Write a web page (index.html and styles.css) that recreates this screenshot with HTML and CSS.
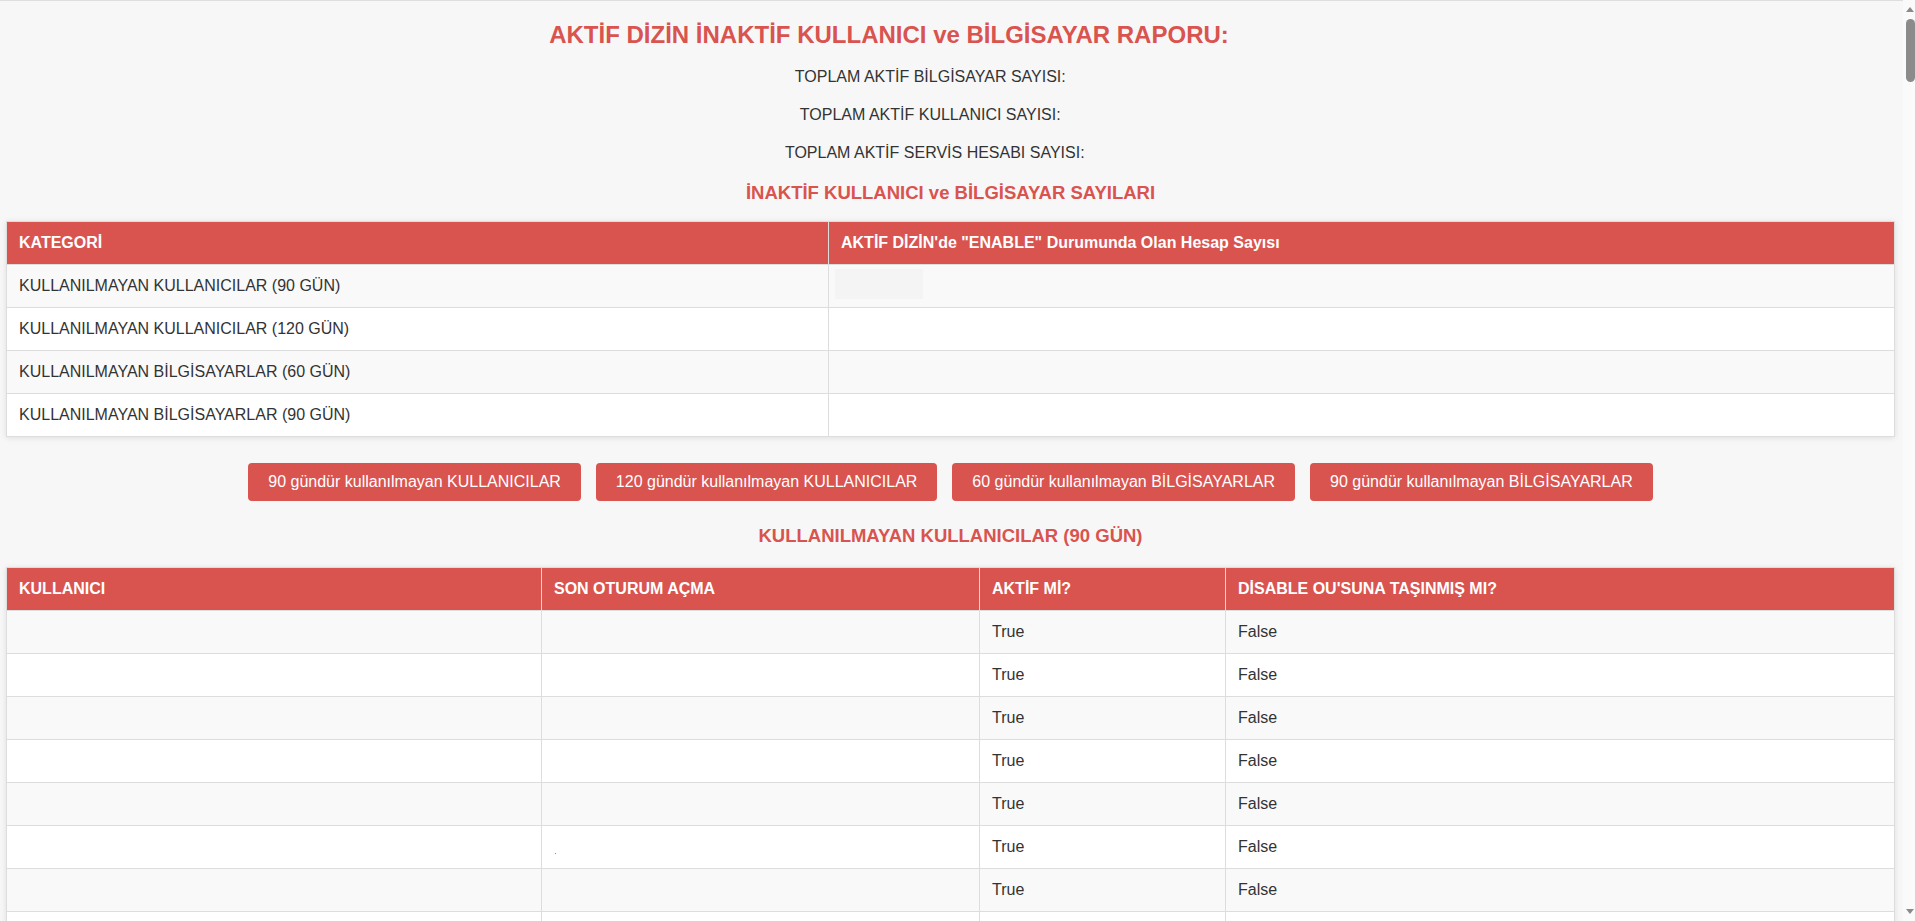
FILE: index.html
```html
<!DOCTYPE html>
<html lang="tr">
<head>
<meta charset="utf-8">
<title>AKTİF DİZİN İNAKTİF KULLANICI ve BİLGİSAYAR RAPORU</title>
<link rel="stylesheet" href="styles.css">
</head>
<body>
<main class="report">
  <h2 class="report-title">AKTİF DİZİN İNAKTİF KULLANICI ve BİLGİSAYAR RAPORU:<span class="blank blank-title"></span></h2>
  <p class="total">TOPLAM AKTİF BİLGİSAYAR SAYISI: <span class="blank blank-4"></span></p>
  <p class="total">TOPLAM AKTİF KULLANICI SAYISI: <span class="blank blank-4"></span></p>
  <p class="total">TOPLAM AKTİF SERVİS HESABI SAYISI: <span class="blank blank-3"></span></p>

  <h3 class="section-title section-first">İNAKTİF KULLANICI ve BİLGİSAYAR SAYILARI</h3>
  <table class="grid summary">
    <colgroup><col class="col-category"><col></colgroup>
    <thead>
      <tr><th>KATEGORİ</th><th>AKTİF DİZİN'de "ENABLE" Durumunda Olan Hesap Sayısı</th></tr>
    </thead>
    <tbody>
      <tr><td>KULLANILMAYAN KULLANICILAR (90 GÜN)</td><td><span class="masked"></span></td></tr>
      <tr><td>KULLANILMAYAN KULLANICILAR (120 GÜN)</td><td></td></tr>
      <tr><td>KULLANILMAYAN BİLGİSAYARLAR (60 GÜN)</td><td></td></tr>
      <tr><td>KULLANILMAYAN BİLGİSAYARLAR (90 GÜN)</td><td></td></tr>
    </tbody>
  </table>

  <div class="actions">
    <button class="btn" type="button">90 gündür kullanılmayan KULLANICILAR</button>
    <button class="btn" type="button">120 gündür kullanılmayan KULLANICILAR</button>
    <button class="btn" type="button">60 gündür kullanılmayan BİLGİSAYARLAR</button>
    <button class="btn" type="button">90 gündür kullanılmayan BİLGİSAYARLAR</button>
  </div>

  <h3 class="section-title section-second">KULLANILMAYAN KULLANICILAR (90 GÜN)</h3>
  <table class="grid users">
    <colgroup><col class="col-user"><col class="col-logon"><col class="col-active"><col></colgroup>
    <thead>
      <tr><th>KULLANICI</th><th>SON OTURUM AÇMA</th><th>AKTİF Mİ?</th><th>DİSABLE OU'SUNA TAŞINMIŞ MI?</th></tr>
    </thead>
    <tbody>
      <tr><td></td><td></td><td>True</td><td>False</td></tr>
      <tr><td></td><td></td><td>True</td><td>False</td></tr>
      <tr><td></td><td></td><td>True</td><td>False</td></tr>
      <tr><td></td><td></td><td>True</td><td>False</td></tr>
      <tr><td></td><td></td><td>True</td><td>False</td></tr>
      <tr><td></td><td><span class="speck"></span></td><td>True</td><td>False</td></tr>
      <tr><td></td><td></td><td>True</td><td>False</td></tr>
      <tr><td></td><td></td><td></td><td></td></tr>
    </tbody>
  </table>
</main>
<aside class="scrollbar" aria-hidden="true">
  <span class="scroll-arrow scroll-up"></span>
  <span class="scroll-thumb"></span>
  <span class="scroll-arrow scroll-down"></span>
</aside>
</body>
</html>
```
FILE: styles.css
```css
html {
  background: #f7f7f7;
  border-top: 1px solid #dedede;
}

body {
  margin: 0;
  font-family: "Liberation Sans", Arial, sans-serif;
  font-size: 16px;
  color: #333;
}

.report {
  padding: 0 20px 40px 6px;
  text-align: center;
}

.report-title {
  margin: 20px 0 0;
  font-size: 24px;
  line-height: 28px;
  font-weight: bold;
  color: #d9534f;
}

.total {
  margin: 16px 0 0;
  line-height: 22px;
}

.report-title + .total {
  margin-top: 17px;
}

.blank {
  display: inline-block;
  height: 1px;
}

.blank-title { width: 123px; }
.blank-4 { width: 36px; }
.blank-3 { width: 27px; }

.section-title {
  margin: 0;
  font-size: 18.5px;
  line-height: 22px;
  font-weight: bold;
  color: #d9534f;
}

.section-first { margin-top: 18px; }
.section-second { margin-top: 24px; }

.grid {
  width: 100%;
  border-collapse: collapse;
  table-layout: fixed;
  background: #fff;
  text-align: left;
  box-shadow: 0 1px 6px rgba(0, 0, 0, 0.1);
}

.summary { margin-top: 17px; }
.users { margin-top: 20px; }

.col-category { width: 822px; }
.col-user { width: 535px; }
.col-logon { width: 438px; }
.col-active { width: 246px; }

.grid th,
.grid td {
  padding: 12px;
  height: 18px;
  line-height: 18px;
  border: 1px solid #ddd;
  font-size: 16px;
}

.grid th {
  background: #d9534f;
  color: #fff;
  font-weight: bold;
}

.grid tbody tr:nth-child(odd) td {
  background: #f9f9f9;
}

.masked {
  display: block;
  width: 88px;
  height: 30px;
  margin: -8px 0 -4px -6px;
  background: #f4f4f4;
}

.speck {
  display: block;
  width: 1px;
  height: 1px;
  margin: 6px 0 -7px 1px;
  background: #b08060;
}

.actions {
  margin-top: 26px;
  display: flex;
  justify-content: center;
  gap: 15px;
}

.btn {
  padding: 10px 20px;
  border: 0;
  border-radius: 4px;
  background: #d9534f;
  color: #fff;
  font-family: inherit;
  font-size: 16px;
  line-height: 18px;
  cursor: pointer;
}

/* Browser scrollbar overlay (the window chrome lies over the page edge) */
.scrollbar {
  position: fixed;
  top: 0;
  right: 0;
  bottom: 0;
  width: 12px;
  background: #fafafa;
  display: flex;
  flex-direction: column;
  align-items: flex-end;
}

.scroll-arrow {
  width: 0;
  height: 0;
  margin-right: 1px;
  border-left: 4px solid transparent;
  border-right: 4px solid transparent;
}

.scroll-up {
  margin-top: 7px;
  border-bottom: 5px solid #8a8a8a;
}

.scroll-down {
  margin-top: auto;
  margin-bottom: 7px;
  border-top: 5px solid #8a8a8a;
}

.scroll-thumb {
  margin-top: 7px;
  width: 9px;
  height: 63px;
  border-radius: 4.5px;
  background: #8b8b8b;
}
```
